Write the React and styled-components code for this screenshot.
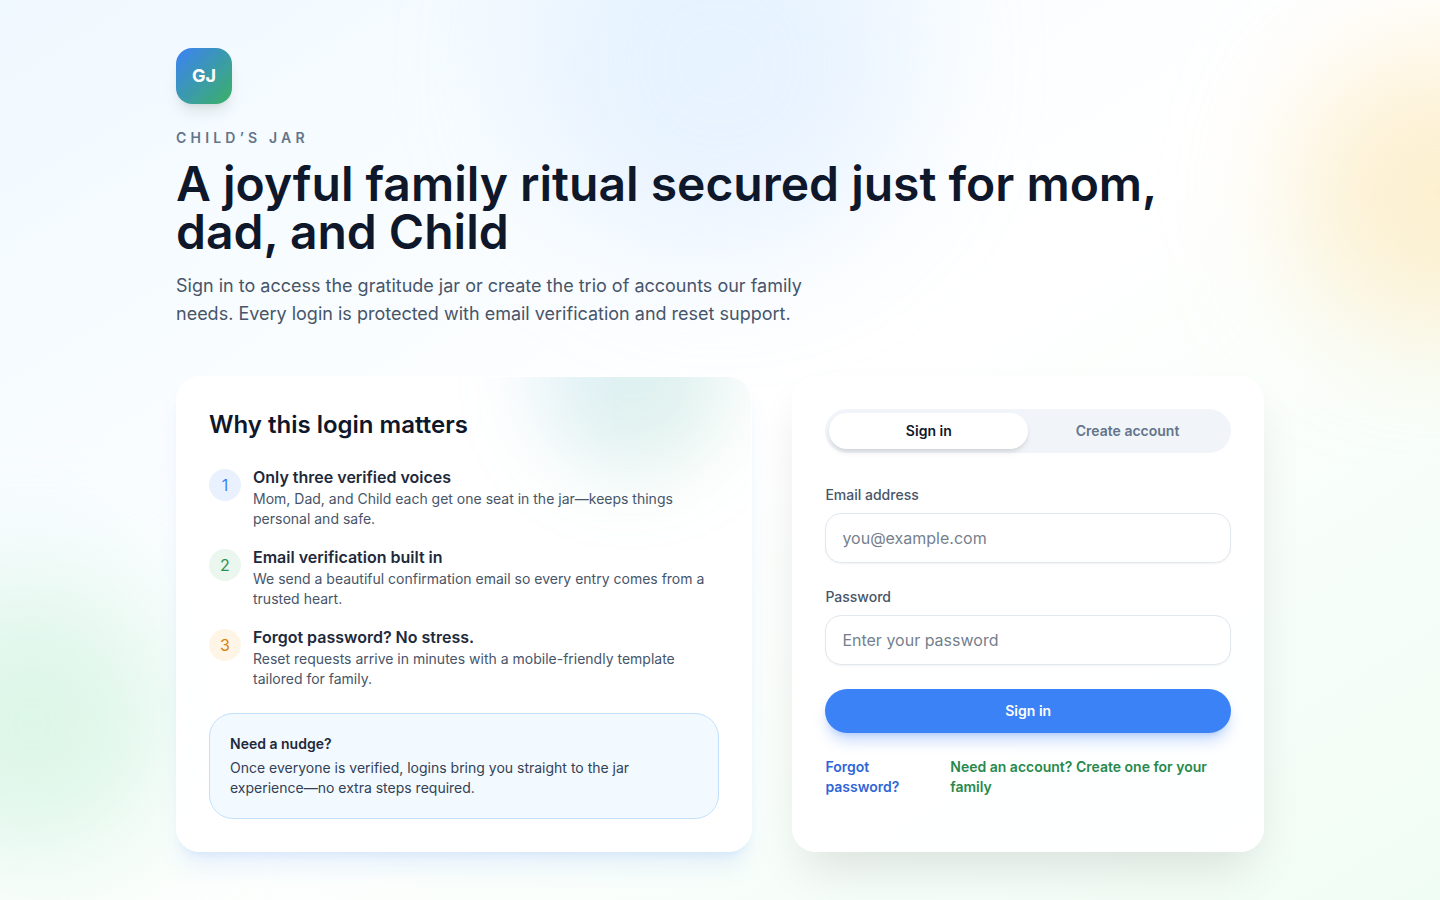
import React, { useState } from "react";
import styled, { createGlobalStyle, css } from "styled-components";

const GlobalStyle = createGlobalStyle`
  *, *::before, *::after { box-sizing: border-box; }
  body {
    margin: 0;
    background: #fff;
    color: #0f172a;
    font-family: Inter, "Liberation Sans", sans-serif;
    font-size: 16px;
    line-height: 24px;
  }
  h1, h2, h3, p, ul, ol { margin: 0; padding: 0; }
  button, input { font: inherit; }
`;

const Page = styled.div`
  position: relative;
  min-height: 100vh;
  overflow: hidden;
  background: linear-gradient(to bottom right, #f0f9ff, #ffffff 50%, #f0fdf4);
`;

const Glow = styled.div`
  position: absolute;
  border-radius: 50%;
  pointer-events: none;
  filter: blur(64px);
`;

const BlueGlow = styled(Glow)`
  top: -128px;
  left: 50%;
  width: 384px;
  height: 384px;
  margin-left: -192px;
  background: rgba(191, 222, 255, 0.3);
`;

const AmberGlow = styled(Glow)`
  top: 48px;
  right: -144px;
  width: 288px;
  height: 288px;
  background: rgba(252, 222, 150, 0.45);
`;

const GreenGlow = styled(Glow)`
  bottom: 32px;
  left: -112px;
  width: 288px;
  height: 288px;
  background: rgba(187, 240, 208, 0.5);
`;

const Container = styled.main`
  position: relative;
  display: flex;
  flex-direction: column;
  gap: 48px;
  max-width: 1152px;
  margin: 0 auto;
  padding: 48px 32px;
`;

const Logo = styled.div`
  display: flex;
  align-items: center;
  justify-content: center;
  width: 56px;
  height: 56px;
  margin-bottom: 24px;
  border-radius: 16px;
  background: linear-gradient(to bottom right, #3b82f6, #3bb165);
  box-shadow: 0 10px 15px -3px rgba(0, 0, 0, 0.1), 0 4px 6px -4px rgba(0, 0, 0, 0.1);
  color: #fff;
  font-size: 18px;
  line-height: 28px;
  font-weight: 700;
`;

const Kicker = styled.p`
  margin-bottom: 12px;
  color: #64748b;
  font-size: 14px;
  line-height: 20px;
  font-weight: 600;
  letter-spacing: 0.3em;
  text-transform: uppercase;
`;

const Headline = styled.h1`
  margin-bottom: 16px;
  color: #0f172a;
  font-size: 48px;
  line-height: 48px;
  font-weight: 600;
`;

const Lead = styled.p`
  max-width: 672px;
  color: #475569;
  font-size: 18px;
  line-height: 28px;
`;

const Columns = styled.div`
  display: grid;
  grid-template-columns: 1.1fr 0.9fr;
  gap: 40px;
  @media (max-width: 900px) {
    grid-template-columns: 1fr;
  }
`;

const Card = styled.section`
  position: relative;
  padding: 32px;
  border: 1px solid rgba(255, 255, 255, 0.7);
  border-radius: 24px;
  background: rgba(255, 255, 255, 0.9);
`;

const ReasonsCard = styled(Card)`
  overflow: hidden;
  box-shadow: 0 20px 25px -5px rgba(59, 130, 246, 0.1), 0 8px 10px -6px rgba(59, 130, 246, 0.12);
`;

const FormCard = styled(Card)`
  box-shadow: 0 25px 50px -12px rgba(0, 0, 0, 0.12);
`;

const CardGlow = styled(Glow)`
  top: -96px;
  right: 24px;
  width: 192px;
  height: 192px;
  background: linear-gradient(to bottom right, rgba(80, 165, 250, 0.17), rgba(59, 177, 110, 0.18));
  filter: blur(40px);
`;

const CardTitle = styled.h2`
  position: relative;
  margin-bottom: 24px;
  font-size: 24px;
  line-height: 32px;
  font-weight: 600;
`;

const Reasons = styled.ol`
  position: relative;
  display: flex;
  flex-direction: column;
  gap: 16px;
  margin-bottom: 24px;
  list-style: none;
`;

const Reason = styled.li`
  display: flex;
  gap: 12px;
`;

const tones = {
  blue: css`background: #e9f1fe; color: #3b82f6;`,
  green: css`background: #ebf6ef; color: #2b9150;`,
  amber: css`background: #fef5e6; color: #d97f06;`,
};

const Badge = styled.span`
  display: flex;
  flex: none;
  align-items: center;
  justify-content: center;
  width: 32px;
  height: 32px;
  margin-top: 4px;
  border-radius: 50%;
  ${({ $tone }) => tones[$tone]}
`;

const ReasonTitle = styled.h3`
  color: #1e293b;
  font-size: 16px;
  line-height: 24px;
  font-weight: 600;
`;

const ReasonText = styled.p`
  color: #475569;
  font-size: 14px;
  line-height: 20px;
`;

const Nudge = styled.aside`
  position: relative;
  padding: 20px;
  border: 1px solid #c2e0fe;
  border-radius: 24px;
  background: #f2f9ff;
  color: #334155;
  font-size: 14px;
  line-height: 20px;
`;

const NudgeTitle = styled.p`
  margin-bottom: 4px;
  color: #1e293b;
  font-weight: 600;
`;

const Tabs = styled.div`
  display: grid;
  grid-template-columns: 1fr 1fr;
  margin-bottom: 32px;
  padding: 4px;
  border-radius: 22px;
  background: #f1f5f9;
`;

const Tab = styled.button`
  padding: 8px 16px;
  border: 0;
  border-radius: 18px;
  background: ${({ $active }) => ($active ? "#fff" : "transparent")};
  box-shadow: ${({ $active }) =>
    $active ? "0 4px 6px -1px rgba(0, 0, 0, 0.1), 0 2px 4px -2px rgba(0, 0, 0, 0.1)" : "none"};
  color: ${({ $active }) => ($active ? "#0f172a" : "#64748b")};
  font-size: 14px;
  line-height: 20px;
  font-weight: 600;
  cursor: pointer;
`;

const Form = styled.form`
  display: flex;
  flex-direction: column;
  gap: 24px;
`;

const Field = styled.div`
  display: flex;
  flex-direction: column;
  gap: 8px;
`;

const Label = styled.label`
  color: #475569;
  font-size: 14px;
  line-height: 20px;
  font-weight: 500;
`;

const Input = styled.input`
  width: 100%;
  padding: 12px 16px;
  border: 1px solid #e2e8f0;
  border-radius: 16px;
  background: #fff;
  box-shadow: 0 1px 2px rgba(0, 0, 0, 0.05);
  color: #0f172a;
  line-height: 24px;
  &::placeholder { color: #757f8e; opacity: 1; }
`;

const Submit = styled.button`
  padding: 12px 20px;
  border: 0;
  border-radius: 22px;
  background: #3b82f6;
  box-shadow: 0 10px 15px -3px rgba(59, 130, 246, 0.3), 0 4px 6px -4px rgba(59, 130, 246, 0.3);
  color: #fff;
  font-size: 14px;
  line-height: 20px;
  font-weight: 600;
  cursor: pointer;
`;

const Links = styled.div`
  display: flex;
  justify-content: space-between;
  gap: 12px;
`;

const LinkButton = styled.button`
  padding: 0;
  border: 0;
  background: none;
  color: ${({ $tone }) => ($tone === "green" ? "#27894b" : "#2f66d5")};
  font-size: 14px;
  line-height: 20px;
  font-weight: 600;
  text-align: left;
  cursor: pointer;
`;

const reasons = [
  {
    tone: "blue",
    title: "Only three verified voices",
    text: "Mom, Dad, and Child each get one seat in the jar—keeps things personal and safe.",
  },
  {
    tone: "green",
    title: "Email verification built in",
    text: "We send a beautiful confirmation email so every entry comes from a trusted heart.",
  },
  {
    tone: "amber",
    title: "Forgot password? No stress.",
    text: "Reset requests arrive in minutes with a mobile-friendly template tailored for family.",
  },
];

export default function App() {
  const [mode, setMode] = useState("signin");

  return (
    <>
      <GlobalStyle />
      <Page>
        <BlueGlow />
        <AmberGlow />
        <GreenGlow />
        <Container>
          <header>
            <Logo>GJ</Logo>
            <Kicker>Child’s Jar</Kicker>
            <Headline>A joyful family ritual secured just for mom, dad, and Child</Headline>
            <Lead>
              Sign in to access the gratitude jar or create the trio of accounts our family needs.
              Every login is protected with email verification and reset support.
            </Lead>
          </header>
          <Columns>
            <ReasonsCard>
              <CardGlow />
              <CardTitle>Why this login matters</CardTitle>
              <Reasons>
                {reasons.map((reason, i) => (
                  <Reason key={reason.title}>
                    <Badge $tone={reason.tone}>{i + 1}</Badge>
                    <div>
                      <ReasonTitle>{reason.title}</ReasonTitle>
                      <ReasonText>{reason.text}</ReasonText>
                    </div>
                  </Reason>
                ))}
              </Reasons>
              <Nudge>
                <NudgeTitle>Need a nudge?</NudgeTitle>
                <p>
                  Once everyone is verified, logins bring you straight to the jar experience—no
                  extra steps required.
                </p>
              </Nudge>
            </ReasonsCard>
            <FormCard>
              <Tabs>
                <Tab type="button" $active={mode === "signin"} onClick={() => setMode("signin")}>
                  Sign in
                </Tab>
                <Tab type="button" $active={mode === "create"} onClick={() => setMode("create")}>
                  Create account
                </Tab>
              </Tabs>
              <Form onSubmit={(e) => e.preventDefault()}>
                <Field>
                  <Label htmlFor="email">Email address</Label>
                  <Input id="email" type="email" placeholder="you@example.com" />
                </Field>
                <Field>
                  <Label htmlFor="password">Password</Label>
                  <Input id="password" type="password" placeholder="Enter your password" />
                </Field>
                <Submit type="submit">Sign in</Submit>
                <Links>
                  <LinkButton type="button">Forgot password?</LinkButton>
                  <LinkButton type="button" $tone="green" onClick={() => setMode("create")}>
                    Need an account? Create one for your family
                  </LinkButton>
                </Links>
              </Form>
            </FormCard>
          </Columns>
        </Container>
      </Page>
    </>
  );
}
